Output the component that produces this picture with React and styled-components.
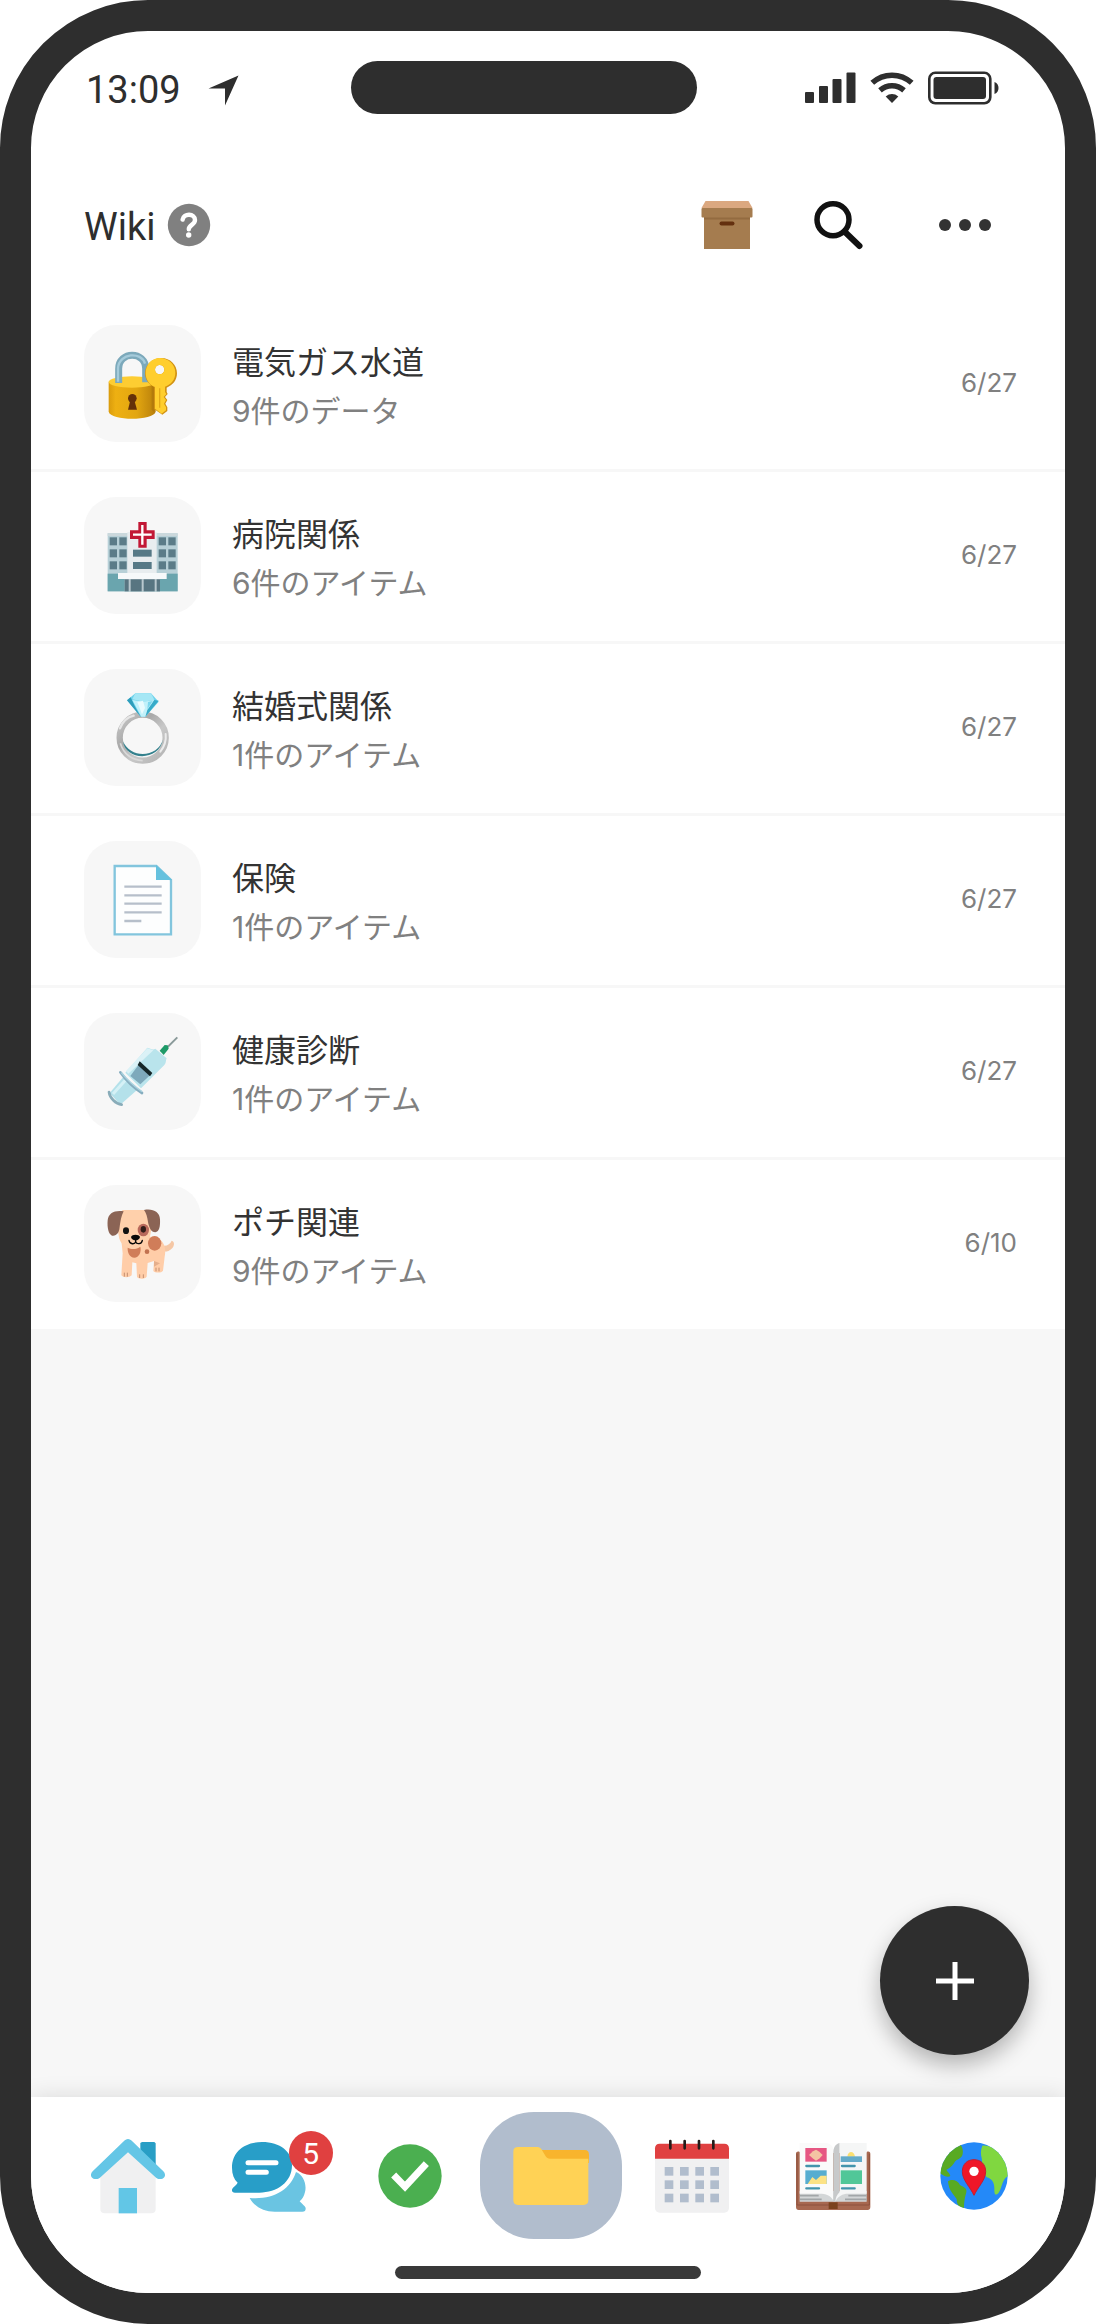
import styled, {createGlobalStyle} from "styled-components";

const GlobalStyle = createGlobalStyle`
  * {
    box-sizing: border-box;
  }
  body {
    margin: 0;
    background: #ffffff;
    font-family: Roboto, "Noto Sans CJK JP", sans-serif;
    color: #2e2e2e;
  }
`;

const Phone = styled.div`
  min-height: 100vh;
  display: flex;
  flex-direction: column;
  border: 31px solid #2e2e2e;
  border-radius: 148px;
  background: #ffffff;
  overflow: hidden;
`;
const StatusBar = styled.div`
  display: grid;
  grid-template-columns: 265fr 346fr 302fr;
  align-items: center;
  padding: 30px 66px 36px 55px;
`;
const StatusLeft = styled.div`
  display: flex;
  align-items: center;
  gap: 27px;
  padding-top: 5px;
`;
const Time = styled.span`
  font-size: 38px;
  line-height: 48px;
`;
const Island = styled.div`
  height: 53px;
  border-radius: 27px;
  background: #2e2e2e;
`;
const StatusRight = styled.div`
  display: flex;
  justify-content: flex-end;
  align-items: center;
  gap: 14px;
`;
const Header = styled.header`
  display: flex;
  align-items: center;
  height: 150px;
  padding: 0 68px 0 53px;
`;
const Title = styled.h1`
  margin: 0 12px 0 0;
  padding-top: 4px;
  font-size: 38px;
  font-weight: 400;
  line-height: 48px;
`;
const IconButton = styled.button`
  display: flex;
  align-items: center;
  justify-content: center;
  width: ${props => props.$size ?? "64px"};
  height: ${props => props.$size ?? "64px"};
  padding: 0;
  border: none;
  background: none;
  cursor: pointer;
`;
const Actions = styled.div`
  display: flex;
  gap: 55px;
  margin-left: auto;
`;
const Main = styled.main`
  position: relative;
  flex: 1;
  background: #f7f7f7;
`;
const List = styled.ul`
  margin: 0;
  padding: 0;
  list-style: none;
  background: #ffffff;
`;
const Item = styled.li`
  border-bottom: 3px solid #f7f7f7;

  &:last-child {
    border-bottom: none;
  }
`;
const ItemLink = styled.a`
  display: flex;
  align-items: center;
  padding: 25px 48px 27px 53px;
  color: inherit;
  text-decoration: none;
`;
const Tile = styled.div`
  display: flex;
  align-items: center;
  justify-content: center;
  width: 117px;
  height: 117px;
  margin-right: 31px;
  border-radius: 32px;
  background: #f7f7f7;
`;
const ItemText = styled.div`
  flex: 1;
  padding-top: 6px;
`;
const ItemName = styled.div`
  font-size: 32px;
  line-height: 48px;
  color: #333333;
`;
const ItemCount = styled.div`
  font-family: Inter, "Noto Sans CJK JP", sans-serif;
  font-size: 30px;
  line-height: 48px;
  color: #808080;
`;
const ItemDate = styled.time`
  padding-bottom: 2px;
  font-family: Inter, sans-serif;
  font-size: 26px;
  line-height: 32px;
  color: #808080;
`;
const AddButton = styled.button`
  position: absolute;
  right: 36px;
  bottom: 42px;
  display: flex;
  align-items: center;
  justify-content: center;
  width: 149px;
  height: 149px;
  padding: 0;
  border: none;
  border-radius: 50%;
  background: #2e2e2e;
  box-shadow: 0 10px 22px rgba(0, 0, 0, 0.28);
  cursor: pointer;
`;
const Nav = styled.nav`
  position: relative;
  display: flex;
  padding: 15px 20px 13px 26px;
  background: #ffffff;
  box-shadow: 0 0 22px rgba(0, 0, 0, 0.12);
`;
const NavLink = styled.a`
  position: relative;
  flex: 1;
  display: flex;
  align-items: center;
  justify-content: center;
  height: 127px;
  border-radius: 54px;
  background: ${props => props.$active ? "#b1bdcd" : "none"};
`;
const Badge = styled.span`
  position: absolute;
  top: 19px;
  left: calc(50% + 20px);
  width: 44px;
  height: 44px;
  border-radius: 50%;
  background: #e04040;
  color: #ffffff;
  font-size: 30px;
  line-height: 46px;
  text-align: center;
`;
const HomeArea = styled.div`
  position: relative;
  display: flex;
  justify-content: center;
  padding: 14px 0;
  background: #ffffff;
`;
const HomeBar = styled.div`
  width: 306px;
  height: 13px;
  border-radius: 7px;
  background: #393939;
`;

const LocationIcon = () => (
  <svg width="31" height="31" viewBox="0 0 31 31" fill="#2e2e2e">
    <path d="M30.5 0.5 L0.5 13.5 H17 V30.5 Z"/>
  </svg>
);

const SignalIcon = () => (
  <svg width="51" height="31" viewBox="0 0 51 31" fill="#2e2e2e">
    <rect x="0" y="20" width="9" height="11" rx="1"/>
    <rect x="14" y="14" width="9" height="17" rx="1"/>
    <rect x="27.500" y="7" width="9" height="24" rx="1"/>
    <rect x="41.500" y="0.500" width="9" height="30.500" rx="1"/>
  </svg>
);

const WifiIcon = () => (
  <svg width="44" height="31" viewBox="0 0 44 31" fill="none" stroke="#2e2e2e" strokeWidth="5.500">
    <path d="M2.300 10.800 C13.500 0.600 30.500 0.600 41.700 10.800"/>
    <path d="M10 18.300 C17 12.300 27 12.300 34 18.300"/>
    <path d="M15.700 24.500 C19.500 21.200 24.500 21.200 28.300 24.500 L22 31 Z" fill="#2e2e2e" stroke="none"/>
  </svg>
);

const BatteryIcon = () => (
  <svg width="71" height="34" viewBox="0 0 71 34">
    <rect x="1.300" y="1.800" width="61" height="30.500" rx="6" fill="none" stroke="#2e2e2e" strokeWidth="2.600"/>
    <rect x="5.500" y="6" width="52.500" height="22" rx="3" fill="#2e2e2e"/>
    <path d="M66.500 11 C69.500 12 70.500 14.500 70.500 17 C70.500 19.500 69.500 22 66.500 23 Z" fill="#2e2e2e"/>
  </svg>
);

const HelpIcon = () => (
  <svg width="44" height="44" viewBox="0 0 44 44">
    <circle cx="22" cy="22" r="21.200" fill="#808080"/>
    <path d="M15.600 16.600 C16.600 9.800 28 10.200 28 17 C28 22 21.800 21.700 21.800 26.300" fill="none" stroke="#ffffff" strokeWidth="4.400" strokeLinecap="round"/>
    <circle cx="21.700" cy="32" r="2.700" fill="#ffffff"/>
  </svg>
);

const BoxIcon = () => (
  <svg width="54" height="50" viewBox="0 0 54 50">
    <rect x="4" y="16" width="46" height="33" fill="#a57c4f"/>
    <rect x="4" y="16" width="46" height="3.500" fill="#936b40"/>
    <path d="M5.500 1 H48.500 L52.500 8 H1.500 Z" fill="#dba880"/>
    <rect x="1.500" y="8" width="51" height="9.500" rx="1" fill="#a57c4f"/>
    <rect x="19.500" y="21.500" width="15" height="4" rx="2" fill="#64300f"/>
  </svg>
);

const SearchIcon = () => (
  <svg width="64" height="64" viewBox="0 0 64 64" fill="none" stroke="#111111" strokeLinecap="round">
    <circle cx="19" cy="26.700" r="16" strokeWidth="5.500"/>
    <path d="M31 39 L45.500 53" strokeWidth="6"/>
  </svg>
);

const MoreIcon = () => (
  <svg width="54" height="14" viewBox="0 0 54 14" fill="#333333">
    <circle cx="7" cy="7" r="6"/>
    <circle cx="27" cy="7" r="6"/>
    <circle cx="47" cy="7" r="6"/>
  </svg>
);

const PlusIcon = () => (
  <svg width="38" height="38" viewBox="0 0 38 38" stroke="#ffffff" strokeWidth="5">
    <path d="M19 0 V38 M0 19 H38"/>
  </svg>
);

const LockIcon = () => (
  <svg width="72" height="72" viewBox="229 143 216 216">
    <defs>
      <linearGradient id="lockBody" x1="0" x2="1">
        <stop offset="0" stopColor="#d99b0c"/>
        <stop offset="0.15" stopColor="#eeb012"/>
        <stop offset="0.6" stopColor="#e2a610"/>
        <stop offset="1" stopColor="#b87f0b"/>
      </linearGradient>
    </defs>
    <path d="M234 244 V334 C240 362 368 362 375 334 V244 Z" fill="url(#lockBody)"/>
    <ellipse cx="304" cy="245" rx="70" ry="17" fill="#fdcd32"/>
    <path d="M264 248 V205 C264 151 345 151 345 205 V246" fill="none" stroke="#7ca9bb" strokeWidth="21"/>
    <path d="M262 244 V203 C266 158 332 152 343 190" fill="none" stroke="#a5cbdb" strokeWidth="7"/>
    <circle cx="305" cy="294" r="13" fill="#643109"/>
    <path d="M299 300 L292 328 H319 L311 300 Z" fill="#643109"/>
    <path d="M363 250 V328 L371 336 V250 Z" fill="#b37a0b"/>
    <path fillRule="evenodd" d="M392 173 C418 173 439 193 439 219 C439 240 426 255 408 262 V275 L411 281 L403 290 L410 299 L404 310 L410 321 V332 L395 343 L370 326 V260 C353 252 343 237 343 219 C343 193 365 173 392 173 Z M387 194 A14 14 0 1 0 387 222 A14 14 0 1 0 387 194 Z" fill="#d29213"/>
    <path fillRule="evenodd" d="M387 173 C413 173 434 193 434 217 C434 238 421 252 403 259 V275 L407 281 L399 290 L406 299 L400 310 L406 321 V330 L393 340 L373 325 V260 C355 253 345 237 345 218 C345 193 363 173 387 173 Z M387 194 A14 14 0 1 0 387 222 A14 14 0 1 0 387 194 Z" fill="#ffce2e"/>
    <path d="M387 264 V322" stroke="#e5aa18" strokeWidth="4"/>
  </svg>
);

const HospitalIcon = () => {
  const rows = [712, 748, 784];
  const columns = [237, 266, 384, 413];
  return (
    <svg width="72" height="72" viewBox="229 660 216 216">
      <path d="M231 700 H441 V874 H231 Z" fill="#b7d0d7"/>
      <path d="M231 700 H441 V708 H231 Z" fill="#cbd8dc"/>
      <rect x="231" y="821" width="210" height="53" fill="#6aa5ae"/>
      <path d="M290 696 H378 V822 H290 Z" fill="#e8edef"/>
      {rows.map(y => columns.map(x => (
        <rect key={`${x}-${y}`} x={x} y={y} width="22" height="24" fill="#5b7c88"/>
      )))}
      <rect x="307" y="749" width="56" height="21" fill="#567986"/>
      <rect x="307" y="786" width="56" height="21" fill="#567986"/>
      <rect x="282" y="836" width="106" height="38" fill="#b9c8ce"/>
      <rect x="282" y="838" width="12" height="36" fill="#587581"/>
      <rect x="300" y="838" width="33" height="36" fill="#587581"/>
      <rect x="339" y="838" width="33" height="36" fill="#587581"/>
      <rect x="378" y="838" width="10" height="36" fill="#587581"/>
      <rect x="262" y="819" width="146" height="18" fill="#f6f9fa"/>
      <path d="M323 666 H348 V691 H372 V717 H348 V743 H323 V717 H298 V691 H323 Z" fill="#c21835"/>
      <path d="M335 675 V734 M307 704 H363" stroke="#ffffff" strokeWidth="7"/>
    </svg>
  );
};

const RingIcon = () => (
  <svg width="72" height="72" viewBox="229 154 216 216">
    <defs>
      <linearGradient id="band" x1="0" x2="1" y1="0" y2="1">
        <stop offset="0" stopColor="#c9c9c9"/>
        <stop offset="0.35" stopColor="#a9a9a9"/>
        <stop offset="0.6" stopColor="#c8c8c8"/>
        <stop offset="1" stopColor="#b3b3b3"/>
      </linearGradient>
    </defs>
    <circle cx="336" cy="291" r="69" fill="none" stroke="url(#band)" strokeWidth="19"/>
    <path d="M277 302 C284 361 386 364 397 296 C384 350 300 357 277 302 Z" fill="#34818d"/>
    <path d="M268 263 C276 242 292 229 309 225" fill="none" stroke="#e6e6e6" strokeWidth="7" strokeLinecap="round"/>
    <path d="M405 280 C407 300 401 318 389 333" fill="none" stroke="#ececec" strokeWidth="6" strokeLinecap="round"/>
    <path d="M269 308 C278 340 304 358 336 360" fill="none" stroke="#d9d9d9" strokeWidth="5"/>
    <path d="M314 158 H361 L384 183 L344 228 H330 L289 179 Z" fill="#6fd3ec"/>
    <path d="M314 158 H361 L371 177 L340 183 L305 176 Z" fill="#a5e7f5"/>
    <path d="M289 179 L300 170 L312 196 L330 228 Z" fill="#2f9dbb"/>
    <path d="M305 178 L338 183 L371 178 L344 228 H332 Z" fill="#c2f1fa"/>
    <path d="M384 180 L371 178 L350 208 L344 228 Z" fill="#38abc8"/>
    <path d="M320 184 L337 180 L343 202 L334 221 Z" fill="#e9fbfe"/>
    <path d="M352 184 L366 181 L350 206 Z" fill="#7ed8ee"/>
  </svg>
);

const DocumentIcon = () => (
  <svg width="72" height="72" viewBox="229 671 216 216">
    <path d="M252 677 H377 L421 719 V882 H252 Z" fill="#fdfefe" stroke="#82c5dd" strokeWidth="7"/>
    <path d="M376 674 L424 719 H376 Z" fill="#65c1de"/>
    <path d="M281 739 H393 M281 765 H393 M281 790 H393 M281 816 H393 M281 842 H332" stroke="#b6bfca" strokeWidth="7"/>
  </svg>
);

const SyringeIcon = () => (
  <svg width="72" height="72" viewBox="229 168 216 216">
    <path d="M406 206 L440 172" stroke="#8a9a9a" strokeWidth="6"/>
    <path d="M387 212 L402 195 L411 196 L414 206 L399 225 Z" fill="#1e9a68"/>
    <path d="M350 203 C360 205 366 212 374 206 L408 235 C404 243 408 247 401 255 L331 325 L284 278 Z" fill="#b9e4ec"/>
    <path d="M350 205 L286 273 L293 281 L368 211 Z" fill="#dbf2f7"/>
    <path d="M325 253 L358 286 L329 313 L299 288 Z" fill="#7ea9bb"/>
    <path d="M327 244 L365 279 L358 289 L321 255 Z" fill="#152628"/>
    <path d="M277 292 L319 330 L269 374 L237 339 Z" fill="#b4e1ea"/>
    <path d="M284 301 L247 342" stroke="#d5f1f6" strokeWidth="9"/>
    <path d="M269 277 C286 301 309 324 334 339" fill="none" stroke="#86adbf" strokeWidth="8" strokeLinecap="round"/>
    <path d="M273 279 C290 300 310 318 333 334" fill="none" stroke="#a9d2df" strokeWidth="4" strokeLinecap="round"/>
    <path d="M235 336 C237 353 255 372 273 374" fill="none" stroke="#89acb9" strokeWidth="8" strokeLinecap="round"/>
  </svg>
);

const DogIcon = () => (
  <svg width="72" height="72" viewBox="229 684 216 216">
    <path d="M383 792 C402 803 418 795 423 782 C437 785 430 811 405 815 Z" fill="#f5c7a5"/>
    <path d="M271 770 H372 C398 778 408 800 402 830 L397 872 C392 880 373 879 368 873 L370 843 L351 849 L348 890 C342 898 324 898 319 891 L317 850 L305 847 L303 886 C296 894 277 894 272 886 L276 820 Z" fill="#ffcda8"/>
    <path d="M370 843 L388 850 L370 860 Z" fill="#e5af8c"/>
    <path d="M276 690 H343 C360 702 367 740 358 769 C349 800 330 806 313 806 C289 806 267 796 264 766 C257 735 263 703 276 690 Z" fill="#ffd0ab"/>
    <path d="M279 694 C252 690 233 699 231 721 C229 744 234 763 244 767 C259 769 264 757 266 748 C269 725 272 706 279 694 Z" fill="#8b6455"/>
    <path d="M340 690 C367 685 387 696 388 718 C389 740 386 755 374 757 C361 757 355 742 352 726 C350 711 347 700 340 690 Z" fill="#8b6455"/>
    <ellipse cx="338" cy="750" rx="17" ry="19" fill="#b9695b"/>
    <ellipse cx="286" cy="752" rx="9" ry="10" fill="#111111"/>
    <ellipse cx="338" cy="748" rx="8" ry="10" fill="#331d18"/>
    <path d="M301 771 C304 762 325 762 328 771 C327 778 320 781 315 781 C309 781 302 778 301 771 Z" fill="#080808"/>
    <path d="M315 778 V787 M295 781 C297 794 313 794 315 785 C318 794 333 793 335 781" fill="none" stroke="#080808" strokeWidth="4" strokeLinecap="round"/>
    <path d="M291 803 C302 809 319 808 329 800 C333 815 325 833 311 833 C297 833 290 817 291 803 Z" fill="#d07d59"/>
    <ellipse cx="372" cy="790" rx="20" ry="22" fill="#d07d59"/>
    <circle cx="349" cy="815" r="7" fill="#c2714f"/>
    <path d="M281 878 V890 M290 878 V890 M327 883 V894 M338 883 V894 M376 863 V874 M385 863 V874" stroke="#c48e70" strokeWidth="3"/>
  </svg>
);

const HomeIcon = () => (
  <svg width="80" height="80" viewBox="264 169 240 240">
    <path d="M421 190 L426 187 H463 L467 191 V255 L421 220 Z" fill="#289ec5"/>
    <path d="M384 210 L467 287 V388 C467 397 462 401 454 401 H314 C306 401 301 397 301 388 V287 Z" fill="#f0f0f1"/>
    <path d="M384 178 C389 178 393 181 396 184 L490 275 C500 286 494 297 484 298 C474 299 470 296 465 291 L384 218 L303 291 C298 296 294 299 284 298 C274 297 268 286 278 275 L372 184 C375 181 379 178 384 178 Z" fill="#64c6e6"/>
    <rect x="356" y="325" width="55" height="76" fill="#62c6e6"/>
  </svg>
);

const ChatIcon = () => (
  <svg width="80" height="80" viewBox="687 169 240 240">
    <path d="M749 355 C820 361 871 330 888 277 C910 286 921 314 915 337 C912 350 907 358 899 365 C907 374 918 381 917 387 C917 393 914 396 907 396 H824 C792 396 764 382 749 355 Z" fill="#6ac4e2"/>
    <path d="M786 187 C841 187 876 216 876 257 C876 308 831 339 778 339 H705 C697 339 694 333 697 327 C701 321 709 317 713 309 C702 299 696 284 696 264 C696 218 731 187 786 187 Z" fill="#289ec8"/>
    <path d="M744 249 H828 M744 278 H799" stroke="#ffffff" strokeWidth="15" strokeLinecap="round"/>
  </svg>
);

const CheckIcon = () => (
  <svg width="80" height="80" viewBox="1110 169 240 240">
    <circle cx="1230" cy="289" r="95" fill="#4baf50"/>
    <path d="M1181 286 L1215 321 L1279 252" fill="none" stroke="#ffffff" strokeWidth="21"/>
  </svg>
);

const FolderIcon = () => (
  <svg width="80" height="80" viewBox="153 169 240 240">
    <path d="M240 211 H374 C383 211 387 216 387 225 V250 H250 Z" fill="#f8b42d"/>
    <path d="M160 216 C160 206 165 202 175 202 H232 C239 202 243 206 247 213 L257 230 C260 235 264 237 270 237 H385 V362 C385 371 380 376 371 376 H174 C165 376 160 371 160 362 Z" fill="#ffd255"/>
  </svg>
);

const CalendarIcon = () => {
  const rows = [262, 302, 342];
  const columns = [614, 660, 706, 751];
  return (
    <svg width="80" height="80" viewBox="576 169 240 240">
      <rect x="585" y="195" width="222" height="204" rx="14" fill="#f0f0f1"/>
      <path d="M585 237 V206 C585 197 590 192 599 192 H793 C802 192 807 197 807 206 V237 Z" fill="#e04041"/>
      {rows.map(y => columns.map(x => (
        <rect key={`${x}-${y}`} x={x} y={y} width="26" height="26" fill="#b1bdcd"/>
      )))}
      <path d="M631 184 V206 M674 184 V206 M717 184 V206 M760 184 V206" stroke="#241c1a" strokeWidth="8" strokeLinecap="round"/>
    </svg>
  );
};

const BookIcon = () => (
  <svg width="80" height="80" viewBox="998 169 240 240">
    <path d="M1007 222 C1007 214 1018 214 1020 220 H1217 C1220 214 1230 214 1230 222 V382 C1230 388 1227 391 1222 391 H1015 C1010 391 1007 388 1007 382 Z" fill="#a76850"/>
    <path d="M1010 222 V376 H1227 V222" fill="none" stroke="#8c513d" strokeWidth="3"/>
    <rect x="1105" y="368" width="27" height="20" fill="#7b421e"/>
    <path d="M1018 334 H1219 V366 H1018 Z" fill="#d3d6d7"/>
    <path d="M1018 190 H1095 C1112 191 1119 201 1119 212 V362 C1111 347 1096 342 1078 342 H1018 Z" fill="#fafafa"/>
    <path d="M1119 216 C1120 199 1130 191 1138 190 V342 C1130 346 1126 352 1125 366 H1119 Z" fill="#c7c9ca"/>
    <path d="M1138 190 H1219 V342 H1163 C1147 342 1133 349 1125 366 C1127 352 1130 345 1138 337 Z" fill="#f5f6f6"/>
    <path d="M1019 348 H1075 M1019 359 H1084 M1164 348 H1219 M1154 359 H1219" stroke="#a2a6a8" strokeWidth="5"/>
    <rect x="1035" y="205" width="64" height="41" fill="#e65783"/>
    <path d="M1046 226 L1058 215 L1067 210 L1077 216 L1087 226 L1078 236 L1067 243 L1057 236 Z" fill="#f4c4a3"/>
    <rect x="1035" y="272" width="64" height="41" fill="#57add0"/>
    <path d="M1042 313 L1056 292 L1067 301 L1081 288 H1099 V313 Z" fill="#fce285"/>
    <path d="M1161 231 C1162 212 1182 212 1184 231 Z" fill="#fbdf70"/>
    <rect x="1141" y="230" width="64" height="17" fill="#64abc9"/>
    <rect x="1141" y="272" width="64" height="41" fill="#51c798"/>
    <path d="M1038 259 H1076 M1038 326 H1076 M1145 259 H1183 M1145 326 H1183" stroke="#4394ac" strokeWidth="7" strokeLinecap="round"/>
  </svg>
);

const GlobeIcon = () => (
  <svg width="80" height="80" viewBox="342 829 240 240">
    <defs>
      <clipPath id="globe">
        <circle cx="462" cy="949" r="101"/>
      </clipPath>
    </defs>
    <circle cx="462" cy="949" r="101" fill="#2489f8"/>
    <g clipPath="url(#globe)">
      <path d="M350 850 H417 C431 863 430 880 426 889 C418 900 411 898 404 907 C397 919 391 924 379 930 C385 940 389 939 391 949 C385 954 374 952 355 937 Z" fill="#58aa23"/>
      <path d="M384 965 C395 957 413 961 420 976 C429 982 442 984 439 998 C437 1008 432 1018 432 1048 C415 1045 410 1031 410 1018 C402 1006 386 993 384 965 Z" fill="#58aa23"/>
      <path d="M487 858 C506 856 533 865 570 905 V948 C553 951 549 966 543 984 C535 1008 522 1013 523 990 C524 970 516 957 500 953 C484 935 488 913 485 895 C481 881 483 869 487 858 Z" fill="#80d740"/>
    </g>
    <path d="M462 900 C483 900 497 914 497 936 C497 961 473 983 462 1007 C451 983 427 961 427 936 C427 914 441 900 462 900 Z" fill="#ef1728" stroke="#c11d32" strokeWidth="3"/>
    <circle cx="462" cy="935" r="14" fill="#ffffff"/>
  </svg>
);

const folders = [
  {name: "電気ガス水道", count: "9件のデータ", date: "6/27", icon: <LockIcon/>},
  {name: "病院関係", count: "6件のアイテム", date: "6/27", icon: <HospitalIcon/>},
  {name: "結婚式関係", count: "1件のアイテム", date: "6/27", icon: <RingIcon/>},
  {name: "保険", count: "1件のアイテム", date: "6/27", icon: <DocumentIcon/>},
  {name: "健康診断", count: "1件のアイテム", date: "6/27", icon: <SyringeIcon/>},
  {name: "ポチ関連", count: "9件のアイテム", date: "6/10", icon: <DogIcon/>},
];

const tabs = [
  {label: "Home", icon: <HomeIcon/>},
  {label: "Chat", icon: <ChatIcon/>, badge: 5},
  {label: "Tasks", icon: <CheckIcon/>},
  {label: "Wiki", icon: <FolderIcon/>, active: true},
  {label: "Calendar", icon: <CalendarIcon/>},
  {label: "Album", icon: <BookIcon/>},
  {label: "Map", icon: <GlobeIcon/>},
];

const App = () => {
  return (
    <>
      <GlobalStyle/>
      <Phone>
        <StatusBar>
          <StatusLeft>
            <Time>13:09</Time>
            <LocationIcon/>
          </StatusLeft>
          <Island/>
          <StatusRight>
            <SignalIcon/>
            <WifiIcon/>
            <BatteryIcon/>
          </StatusRight>
        </StatusBar>
        <Header>
          <Title>Wiki</Title>
          <IconButton $size={"44px"} aria-label="Help"><HelpIcon/></IconButton>
          <Actions>
            <IconButton aria-label="Archive"><BoxIcon/></IconButton>
            <IconButton aria-label="Search"><SearchIcon/></IconButton>
            <IconButton aria-label="More"><MoreIcon/></IconButton>
          </Actions>
        </Header>
        <Main>
          <List>
            {folders.map((item) => (
              <Item key={item.name}>
                <ItemLink href="#">
                  <Tile>{item.icon}</Tile>
                  <ItemText>
                    <ItemName>{item.name}</ItemName>
                    <ItemCount>{item.count}</ItemCount>
                  </ItemText>
                  <ItemDate>{item.date}</ItemDate>
                </ItemLink>
              </Item>
            ))}
          </List>
          <AddButton aria-label="Add"><PlusIcon/></AddButton>
        </Main>
        <Nav>
          {tabs.map((tab) => (
            <NavLink key={tab.label} href="#" aria-label={tab.label} $active={tab.active}>
              {tab.icon}
              {tab.badge && <Badge>{tab.badge}</Badge>}
            </NavLink>
          ))}
        </Nav>
        <HomeArea>
          <HomeBar/>
        </HomeArea>
      </Phone>
    </>
  );
}

export default App;
